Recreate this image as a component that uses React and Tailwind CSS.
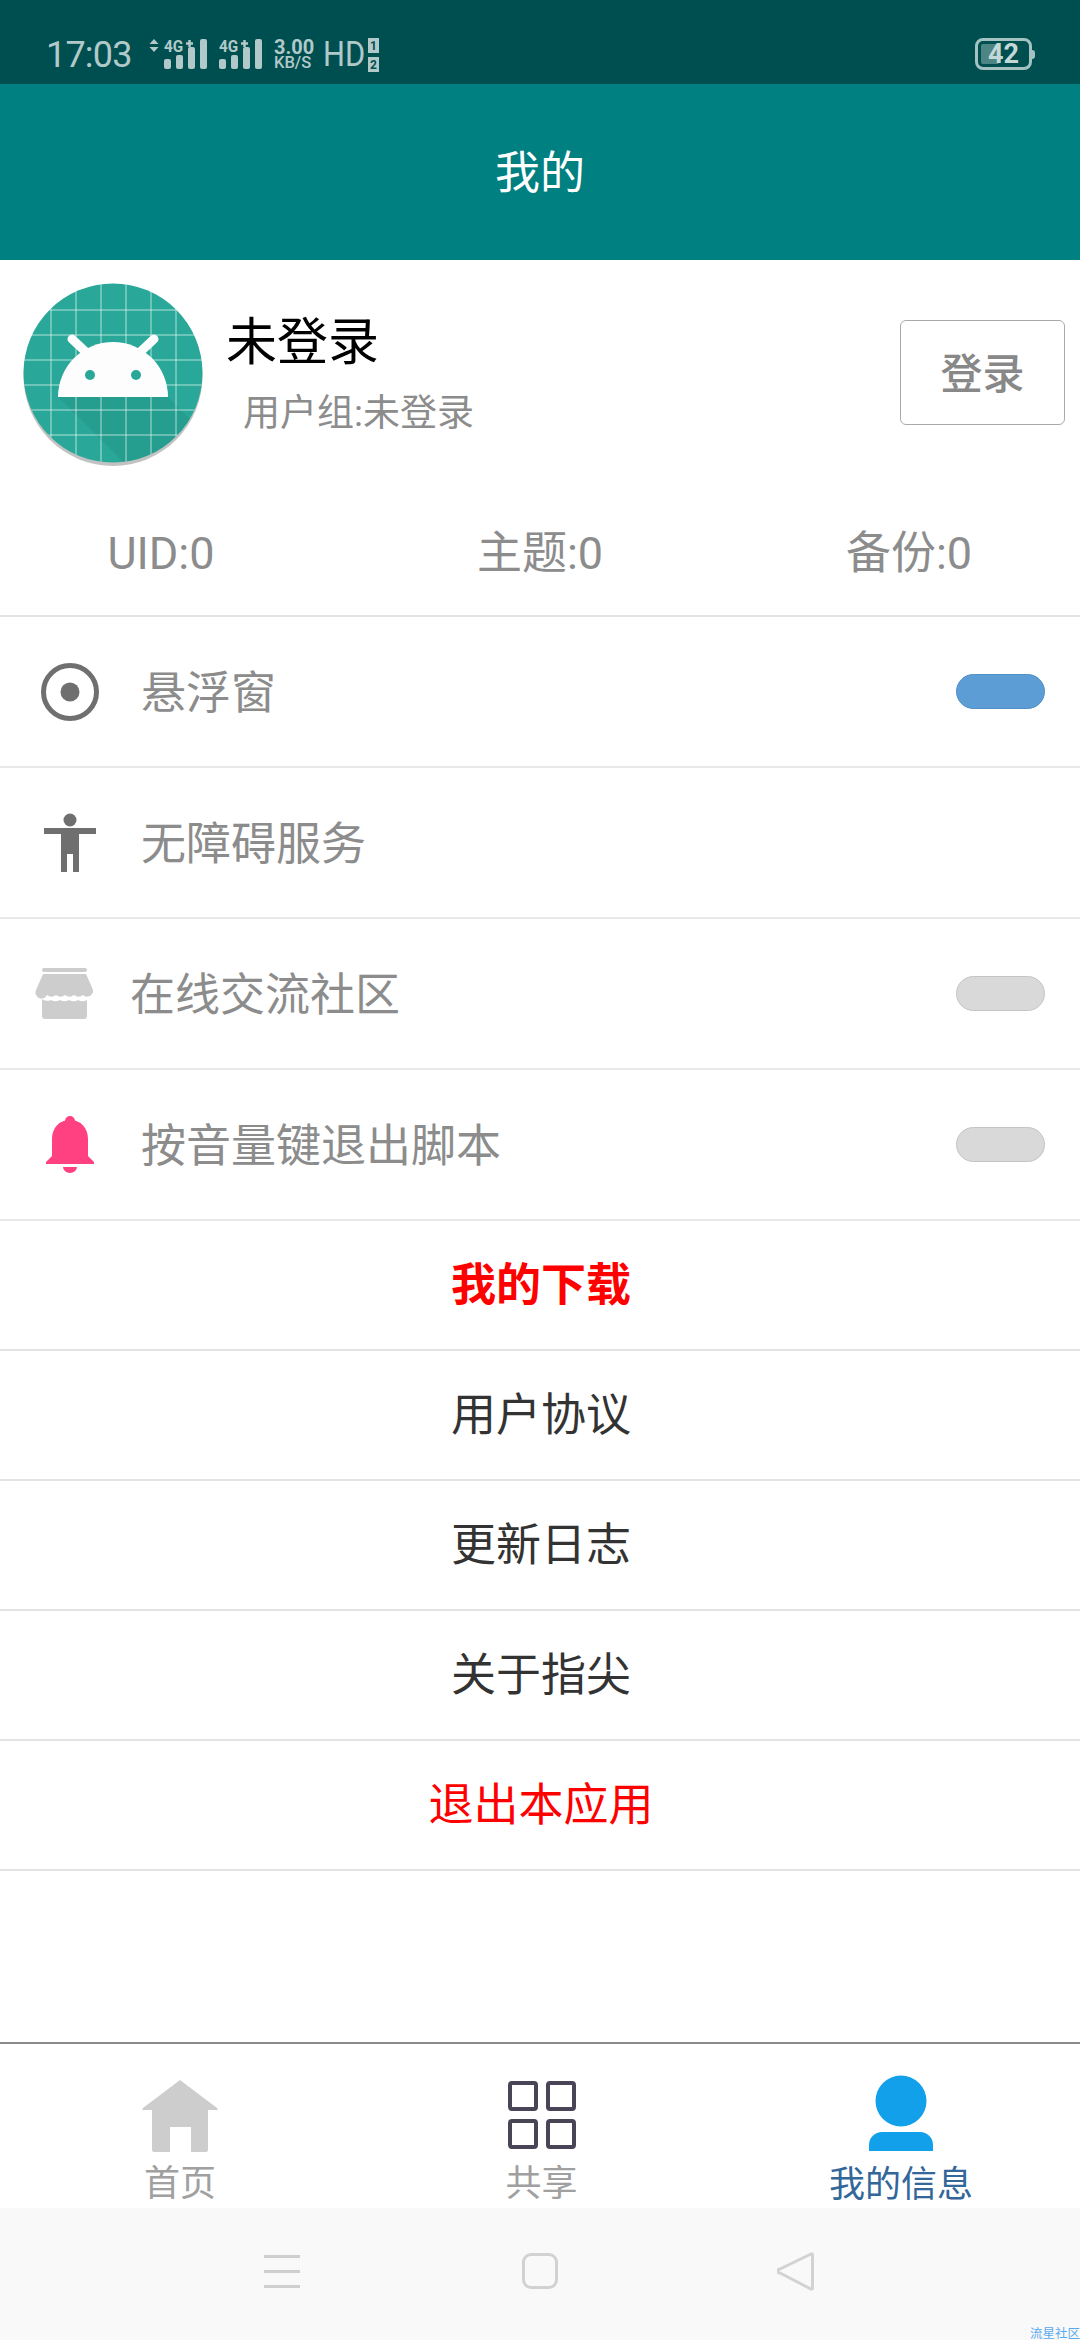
const font = { fontFamily: '"Roboto", "Noto Sans CJK SC", sans-serif' };

function Signal() {
  return (
    <div className="relative h-[32px] w-[44px] shrink-0">
      <svg width="44" height="32" viewBox="0 0 44 32">
        <path d="M22 4.500h7M25.500 1v7" stroke="#b2c9c9" strokeWidth="2.500" />
        <rect x="0" y="20" width="7" height="10" rx="2" fill="#b2c9c9" />
        <rect x="12" y="16" width="7" height="14" rx="2" fill="#b2c9c9" />
        <rect x="24" y="8" width="7" height="22" rx="2" fill="#b2c9c9" />
        <rect x="36" y="0" width="7" height="30" rx="2" fill="#b2c9c9" />
      </svg>
      <span className="absolute left-0 top-0 origin-left scale-x-[0.9] text-[17px] font-bold leading-[15px]">4G</span>
    </div>
  );
}

function StatusBar() {
  return (
    <div className="flex h-[84px] items-start justify-between bg-[#004f50] pl-[46px] pr-[45px] pt-[38px] text-[#b2c9c9]">
      <div className="flex items-start">
        <span className="w-[88px] text-[36px] leading-[34px] tracking-[-0.8px]">17:03</span>
        <svg width="10" height="13" viewBox="0 0 10 13" className="ml-[15px] mt-[1px]">
          <path d="M5 0l4.500 5h-9zM5 13L.5 8h9z" fill="#b2c9c9" />
        </svg>
        <div className="ml-[5px] mt-[1px]"><Signal /></div>
        <div className="ml-[11px] mt-[1px]"><Signal /></div>
        <div className="ml-[11px] flex w-[42px] flex-col font-bold leading-none">
          <span className="text-[20px] leading-[18px]">3.00</span>
          <span className="text-[16.500px] font-medium leading-[14px]">KB/S</span>
        </div>
        <span className="ml-[7px] mt-[2px] w-[45px] origin-left scale-x-[0.88] text-[35px] leading-[30px]">HD</span>
        <div className="flex flex-col gap-[4px] font-bold text-[#004f50]">
          <span className="flex h-[15px] w-[11px] items-center justify-center bg-[#b2c9c9] text-[12px] leading-none">1</span>
          <span className="flex h-[15px] w-[11px] items-center justify-center bg-[#b2c9c9] text-[12px] leading-none">2</span>
        </div>
      </div>
      <div className="flex items-center">
        <div className="relative flex h-[32px] w-[57px] items-center justify-center rounded-[8px] border-[3px] border-[#a5c2c2]">
          <div className="absolute left-[3px] top-[3px] h-[20px] w-[18px] rounded-[2px] bg-[#4d8585]" />
          <span className="relative text-[27px] font-bold leading-none text-[#c4d8d8]">42</span>
        </div>
        <div className="h-[9px] w-[3px] rounded-r-[3px] bg-[#a5c2c2]" />
      </div>
    </div>
  );
}

function Avatar() {
  const lines = [27, 52, 77, 102, 127, 152];
  return (
    <svg width="182" height="186" viewBox="0 0 182 186" className="shrink-0">
      <defs>
        <clipPath id="disc"><circle cx="90" cy="90" r="89.500" /></clipPath>
      </defs>
      <ellipse cx="90" cy="93" rx="89.500" ry="90" fill="#a8a8a8" opacity="0.7" />
      <circle cx="90" cy="90" r="89.500" fill="#29a899" />
      <g clipPath="url(#disc)">
        <path d="M35 114h110l40 40v30H105z" fill="#1f8a7e" opacity="0.35" />
        {lines.map((v) => (
          <g key={v} stroke="#fff" strokeOpacity="0.32" strokeWidth="2">
            <line x1={v + 1} y1="0" x2={v + 1} y2="180" />
            <line x1="0" y1={v} x2="180" y2={v} />
          </g>
        ))}
      </g>
      <path d="M35 114a55 55 0 0 1 110 0z" fill="#fdfdfd" />
      <path d="M49 56L66 72M131 56L114 72" stroke="#fdfdfd" strokeWidth="9" strokeLinecap="round" />
      <circle cx="67" cy="92" r="5" fill="#29a899" />
      <circle cx="113" cy="92" r="5" fill="#29a899" />
    </svg>
  );
}

function Profile() {
  return (
    <div className="flex h-[230px] items-start pl-[23px] pr-[15px] pt-[23px]">
      <Avatar />
      <div className="ml-[21px] flex flex-1 flex-col">
        <span className="mt-[30px] text-[51px] leading-[60px] text-black">未登录</span>
        <span className="ml-[17px] mt-[19px] text-[37px] leading-[44px] text-[#8c8c8c]">用户组:未登录</span>
      </div>
      <button className="mt-[37px] flex h-[105px] w-[165px] items-center justify-center rounded-[6px] border border-[#aaaaaa] pt-[3px] text-[42px] font-medium text-[#888]">
        登录
      </button>
    </div>
  );
}

function Stats() {
  return (
    <div className="grid h-[125px] grid-cols-3 items-center pt-[2px] text-center text-[45px] text-[#8c8c8c]">
      <span className="pr-[38px] leading-none">UID:0</span>
      <span className="leading-none">主题:0</span>
      <span className="pl-[18px] leading-none">备份:0</span>
    </div>
  );
}

function RadioIcon() {
  return (
    <svg width="60" height="60" viewBox="0 0 60 60">
      <circle cx="30" cy="30" r="26.500" fill="none" stroke="#6f6f6f" strokeWidth="5" />
      <circle cx="30" cy="30" r="9.500" fill="#6f6f6f" />
    </svg>
  );
}

function PersonIcon() {
  return (
    <svg width="60" height="60" viewBox="0 0 60 60">
      <circle cx="30" cy="7" r="6.500" fill="#6f6f6f" />
      <path d="M4 15h52v6H39v38h-6V41h-6v18h-6V21H4z" fill="#6f6f6f" />
    </svg>
  );
}

function StoreIcon() {
  return (
    <svg width="60" height="52" viewBox="0 0 60 52">
      <rect x="7" y="0" width="45" height="4" rx="2" fill="#cdcdcd" />
      <path d="M8 6h43l7 16a6 6 0 0 1-10 5 7.500 7.500 0 0 1-9 0 7.500 7.500 0 0 1-9 0 7.500 7.500 0 0 1-9 0 7.500 7.500 0 0 1-9 0 6 6 0 0 1-11-5z" fill="#cdcdcd" />
      <path d="M7 31a9 9 0 0 0 9 1 9 9 0 0 0 9 0 9 9 0 0 0 9 0 9 9 0 0 0 9 0 9 9 0 0 0 9 0v16a3 3 0 0 1-3 3H10a3 3 0 0 1-3-3z" fill="#cdcdcd" />
    </svg>
  );
}

function BellIcon() {
  return (
    <svg width="48" height="58" viewBox="0 0 48 58">
      <circle cx="24" cy="5" r="5" fill="#ff4081" />
      <path d="M24 4c11 0 18 8 18 19v17l6 6v2H0v-2l6-6V23C6 12 13 4 24 4z" fill="#ff4081" />
      <path d="M17 51h14a7 6 0 0 1-14 0z" fill="#ff4081" />
    </svg>
  );
}

function Toggle({ on }) {
  return (
    <div
      className={
        on
          ? "h-[35px] w-[89px] rounded-full border border-[#4f8fc8] bg-[#5c9dd5]"
          : "h-[35px] w-[89px] rounded-full border border-[#c4c4c4] bg-[#d9d9d9]"
      }
    />
  );
}

function SettingRow({ icon, text, toggle, iconBox, textLeft }) {
  return (
    <div className="flex h-[151px] items-center border-b-2 border-[#e8e8e8] pr-[35px]">
      <div className={iconBox}>{icon}</div>
      <span className={textLeft}>{text}</span>
      {toggle}
    </div>
  );
}

function LinkRow({ text, red, bold }) {
  let cls = "flex h-[130px] items-center justify-center border-b-2 border-[#e3e3e3] pl-[2px] pt-[2px] text-[45px] text-[#333]";
  if (red) cls = "flex h-[130px] items-center justify-center border-b-2 border-[#e3e3e3] pl-[2px] pt-[2px] text-[45px] text-[#ff0000]";
  if (bold) cls = "flex h-[130px] items-center justify-center border-b-2 border-[#e3e3e3] pl-[2px] pt-[2px] text-[45px] font-bold text-[#ff0000]";
  return <div className={cls}>{text}</div>;
}

function BottomTabs() {
  return (
    <div className="grid h-[166px] grid-cols-3 border-t-2 border-[#8a8a8a] bg-white">
      <div className="flex flex-col items-center pt-[36px]">
        <svg width="76" height="72" viewBox="0 0 76 72">
          <path d="M38 0l37 28a1 1 0 0 1-1 2H66v40a2 2 0 0 1-2 2H49V47H28v25H12a2 2 0 0 1-2-2V30H2a1 1 0 0 1-1-2z" fill="#cdcdcd" />
        </svg>
        <span className="mt-[13px] text-[36px] leading-[38px] text-[#a0a0a0]">首页</span>
      </div>
      <div className="flex flex-col items-center pl-[3px] pt-[37px]">
        <svg width="68" height="68" viewBox="0 0 68 68">
          <g fill="none" stroke="#4a4556" strokeWidth="4">
            <rect x="2" y="2" width="26" height="26" rx="2" />
            <rect x="40" y="2" width="26" height="26" rx="2" />
            <rect x="2" y="40" width="26" height="26" rx="2" />
            <rect x="40" y="40" width="26" height="26" rx="2" />
          </g>
        </svg>
        <span className="mt-[16px] text-[36px] leading-[38px] text-[#a0a0a0]">共享</span>
      </div>
      <div className="flex flex-col items-center pl-[2px] pt-[31px]">
        <svg width="64" height="76" viewBox="0 0 64 76">
          <circle cx="32" cy="26" r="25.500" fill="#12a0ea" />
          <path d="M0 76V70A13 13 0 0 1 13 57h38a13 13 0 0 1 13 13v6z" fill="#12a0ea" />
        </svg>
        <span className="mt-[15px] text-[36px] leading-[38px] text-[#336699]">我的信息</span>
      </div>
    </div>
  );
}

function NavBar() {
  return (
    <div className="relative flex h-[132px] items-center bg-[#f9f9f9] pb-[6px] pl-[264px]">
      <div className="flex w-[36px] flex-col gap-[12px]">
        <div className="h-[3px] bg-[#cfcfcf]" />
        <div className="h-[3px] bg-[#cfcfcf]" />
        <div className="h-[3px] bg-[#cfcfcf]" />
      </div>
      <div className="ml-[222px] h-[36px] w-[36px] rounded-[9px] border-[3px] border-[#d2d2d2]" />
      <svg width="38" height="40" viewBox="0 0 38 40" className="ml-[219px]">
        <path d="M34 3L3 18a2 2 0 0 0 0 4l31 16a1 1 0 0 0 1.500-1V4a1 1 0 0 0-1.500-1z" fill="none" stroke="#d2d2d2" strokeWidth="3" strokeLinejoin="round" />
      </svg>
      <span className="absolute bottom-0 right-0 text-[12.500px] leading-[13px] text-[#5aa9ee]">流星社区</span>
    </div>
  );
}

export default function App() {
  return (
    <div className="flex h-[2340px] w-[1080px] flex-col overflow-hidden bg-white" style={font}>
      <StatusBar />
      <div className="flex h-[176px] items-center justify-center bg-[#008080] pt-[3px] text-[45px] text-white">我的</div>
      <Profile />
      <Stats />
      <div className="border-t-2 border-[#e3e3e3]">
        <SettingRow
          iconBox="ml-[40px] flex w-[60px] justify-center"
          textLeft="ml-[41px] flex-1 pt-[5px] text-[45px] text-[#8c8c8c]"
          icon={<RadioIcon />}
          text="悬浮窗"
          toggle={<Toggle on />}
        />
        <SettingRow
          iconBox="ml-[40px] flex w-[60px] justify-center"
          textLeft="ml-[41px] flex-1 pt-[5px] text-[45px] text-[#8c8c8c]"
          icon={<PersonIcon />}
          text="无障碍服务"
        />
        <SettingRow
          iconBox="ml-[35px] flex w-[60px] justify-center"
          textLeft="ml-[35px] flex-1 pt-[5px] text-[45px] text-[#8c8c8c]"
          icon={<StoreIcon />}
          text="在线交流社区"
          toggle={<Toggle />}
        />
        <SettingRow
          iconBox="ml-[40px] flex w-[60px] justify-center"
          textLeft="ml-[41px] flex-1 pt-[5px] text-[45px] text-[#8c8c8c]"
          icon={<BellIcon />}
          text="按音量键退出脚本"
          toggle={<Toggle />}
        />
      </div>
      <LinkRow text="我的下载" red bold />
      <LinkRow text="用户协议" />
      <LinkRow text="更新日志" />
      <LinkRow text="关于指尖" />
      <LinkRow text="退出本应用" red />
      <div className="flex-1" />
      <BottomTabs />
      <NavBar />
    </div>
  );
}
